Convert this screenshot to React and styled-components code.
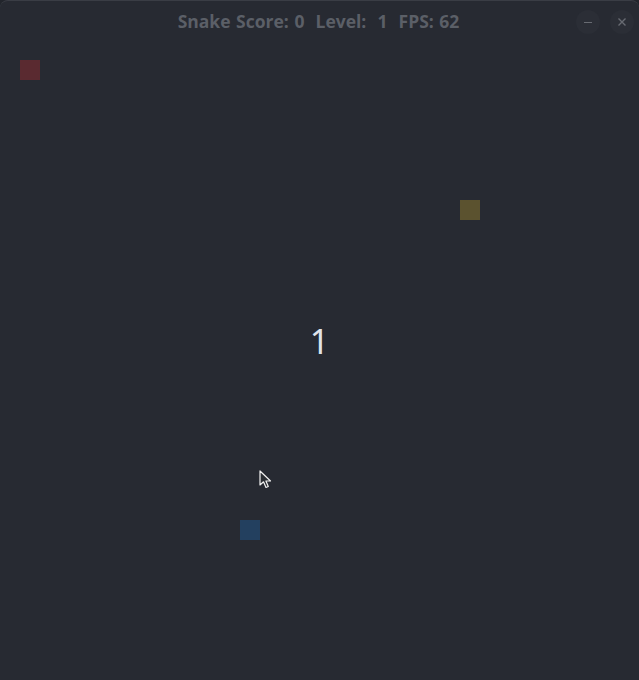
import React from "react"
import styled, { createGlobalStyle } from 'styled-components'

const GlobalStyle = createGlobalStyle`
    html, body {
        margin: 0;
        padding: 0;
        background: #22252c;
    }
    * { box-sizing: border-box; }
`

const Window = styled.div`
    width: 639px;
    height: 680px;
    background: #272a32;
    border-top-left-radius: 8px;
    border-top-right-radius: 8px;
    border-top: 1px solid #3a3d45;
    display: flex;
    flex-direction: column;
    overflow: hidden;
`

const TitleBar = styled.div`
    height: 41px;
    display: grid;
    grid-template-columns: 1fr auto 1fr;
    align-items: center;
    padding: 0 5px 0 0;
`

const Title = styled.div`
    grid-column: 2;
    font-family: "Open Sans", "DejaVu Sans", sans-serif;
    font-weight: 700;
    font-size: 17.5px;
    word-spacing: 1px;
    color: #5b5f67;
    white-space: pre;
    margin-left: 3px;
    margin-bottom: 1px;
`

const Controls = styled.div`
    grid-column: 3;
    justify-self: end;
    display: flex;
    gap: 10px;
`

const RoundButton = styled.div`
    width: 24px;
    height: 24px;
    border-radius: 50%;
    background: #2b2e36;
    display: flex;
    align-items: center;
    justify-content: center;
`

const Board = styled.div`
    flex: 1;
    position: relative;
`

const Cell = styled.div`
    position: absolute;
    width: 20px;
    height: 20px;
    left: ${p => p.x}px;
    top: ${p => p.y}px;
    background: ${p => p.color};
`

const Countdown = styled.div`
    position: absolute;
    left: 0;
    right: 0;
    top: 276px;
    text-align: center;
    font-family: "Noto Sans", "DejaVu Sans", sans-serif;
    font-size: 34px;
    color: #dfe3ea;
`

const Cursor = styled.svg`
    position: absolute;
    left: 259px;
    top: 428px;
`

const App = () => {
    return (
        <>
            <GlobalStyle />
            <Window>
                <TitleBar>
                    <Title>{"Snake Score: 0  Level:  1  FPS: 62"}</Title>
                    <Controls>
                        <RoundButton>
                            <svg width="10" height="10" viewBox="0 0 10 10">
                                <line x1="1" y1="5.5" x2="9" y2="5.5" stroke="#686b72" strokeWidth="1.2" />
                            </svg>
                        </RoundButton>
                        <RoundButton>
                            <svg width="10" height="10" viewBox="0 0 10 10">
                                <path d="M1.5 1.5 L8.5 8.5 M8.5 1.5 L1.5 8.5" stroke="#686b72" strokeWidth="1.4" />
                            </svg>
                        </RoundButton>
                    </Controls>
                </TitleBar>
                <Board>
                    <Cell x={20} y={18} color="#5a2a30" />
                    <Cell x={460} y={158} color="#5b522f" />
                    <Cell x={240} y={478} color="#23405f" />
                    <Countdown>1</Countdown>
                    <Cursor width="14" height="20" viewBox="0 0 14 20">
                        <path d="M1 1 L1 15 L4.5 11.8 L7 17.5 L9.3 16.5 L6.9 11 L11.5 11 Z" fill="#2b2e33" stroke="#f2f2f2" strokeWidth="1.2" strokeLinejoin="round" />
                    </Cursor>
                </Board>
            </Window>
        </>
    )
}

export default App
